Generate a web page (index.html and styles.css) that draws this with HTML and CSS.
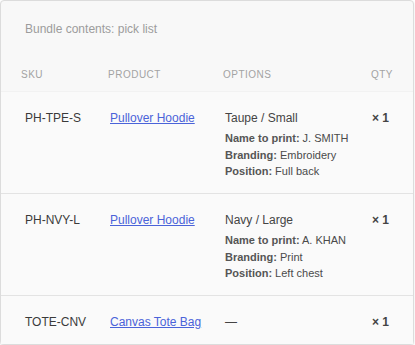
FILE: index.html
```html
<!DOCTYPE html>
<html lang="en">
<head>
<meta charset="utf-8">
<title>Bundle contents</title>
<link rel="stylesheet" href="styles.css">
</head>
<body>
<section class="card">
  <h2 class="title">Bundle contents: pick list</h2>
  <div class="head">
    <span>SKU</span>
    <span>Product</span>
    <span>Options</span>
    <span class="qty-h">Qty</span>
  </div>
  <div class="row">
    <span class="sku">PH-TPE-S</span>
    <span><a class="link" href="#">Pullover Hoodie</a></span>
    <div class="opts">
      <div class="main">Taupe / Small</div>
      <ul class="subs">
        <li><b>Name to print:</b> J. SMITH</li>
        <li><b>Branding:</b> Embroidery</li>
        <li><b>Position:</b> Full back</li>
      </ul>
    </div>
    <span class="qty">× 1</span>
  </div>
  <div class="row">
    <span class="sku">PH-NVY-L</span>
    <span><a class="link" href="#">Pullover Hoodie</a></span>
    <div class="opts">
      <div class="main">Navy / Large</div>
      <ul class="subs">
        <li><b>Name to print:</b> A. KHAN</li>
        <li><b>Branding:</b> Print</li>
        <li><b>Position:</b> Left chest</li>
      </ul>
    </div>
    <span class="qty">× 1</span>
  </div>
  <div class="row last">
    <span class="sku">TOTE-CNV</span>
    <span><a class="link" href="#">Canvas Tote Bag</a></span>
    <div class="opts">
      <div class="main">—</div>
    </div>
    <span class="qty">× 1</span>
  </div>
</section>
</body>
</html>
```
FILE: styles.css
```css
* { box-sizing: border-box; }
html, body { margin: 0; padding: 0; background: #ffffff; }
body { font-family: "Liberation Sans", Arial, sans-serif; color: #333; }
.card {
  width: 414px;
  background: #f8f8f8;
  border: 1px solid #dcdcdc;
  border-radius: 4px;
  box-shadow: 0 1px 2px rgba(0,0,0,0.12);
}
.title {
  margin: 0;
  padding: 20px 24px 0;
  font-size: 12px;
  line-height: 16px;
  font-weight: normal;
  color: #9c9c9c;
}
.head {
  display: grid;
  grid-template-columns: 87px 115px 1fr auto;
  padding: 31px 20px 9px 20px;
  font-size: 10px;
  line-height: 14px;
  letter-spacing: 0.5px;
  text-transform: uppercase;
  color: #a3a3a3;
  border-bottom: 1px solid #f2f2f2;
}
.qty-h { text-align: right; }
.row {
  display: grid;
  grid-template-columns: 85px 115px 1fr auto;
  align-items: start;
  padding: 18px 24px 13.5px;
  font-size: 12px;
  line-height: 16px;
  border-bottom: 1px solid #e3e3e3;
  background: #fafafa;
}
.row.last { border-bottom: 0; }
.sku { color: #3a3a3a; }
.link { color: #4a63d9; text-decoration: underline; }
.main { color: #444; }
.subs {
  list-style: none;
  margin: 4px 0 0;
  padding: 0;
  font-size: 11px;
  line-height: 16.5px;
  color: #4a4a4a;
}
.subs b { color: #555; font-weight: bold; }
.qty { font-weight: bold; color: #444; text-align: right; }
```
